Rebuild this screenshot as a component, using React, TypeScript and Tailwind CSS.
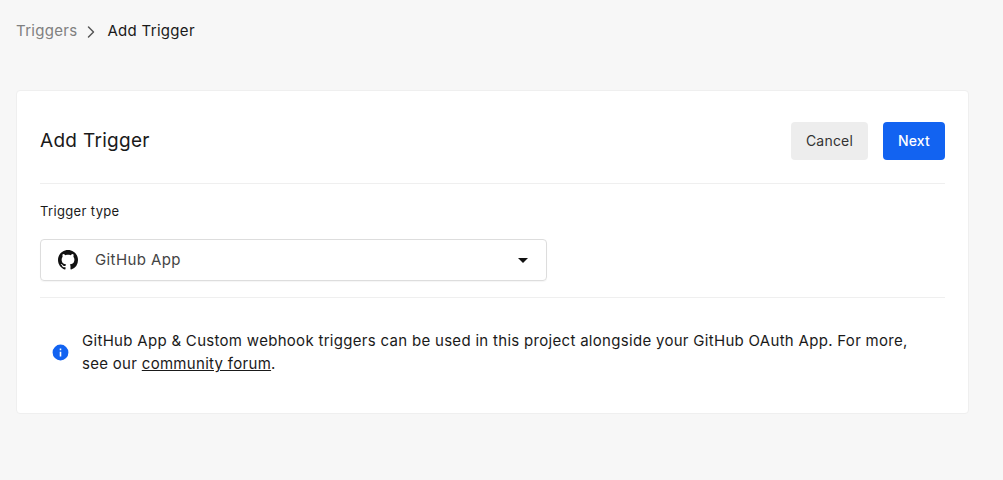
import { ChevronRight } from "lucide-react";

function GithubMark() {
  return (
    <svg viewBox="0 0 16 16" className="w-[20px] h-[20px]" fill="#111">
      <path d="M8 0C3.58 0 0 3.58 0 8c0 3.54 2.29 6.53 5.47 7.59.4.07.55-.17.55-.38 0-.19-.01-.82-.01-1.49-2.01.37-2.53-.49-2.69-.94-.09-.23-.48-.94-.82-1.13-.28-.15-.68-.52-.01-.53.63-.01 1.08.58 1.23.82.72 1.21 1.87.87 2.33.66.07-.52.28-.87.51-1.07-1.78-.2-3.64-.89-3.64-3.95 0-.87.31-1.59.82-2.15-.08-.2-.36-1.02.08-2.12 0 0 .67-.21 2.2.82.64-.18 1.32-.27 2-.27s1.36.09 2 .27c1.53-1.04 2.2-.82 2.2-.82.44 1.1.16 1.92.08 2.12.51.56.82 1.27.82 2.15 0 3.07-1.87 3.75-3.65 3.95.29.25.54.73.54 1.48 0 1.07-.01 1.93-.01 2.2 0 .21.15.46.55.38A8.01 8.01 0 0 0 16 8c0-4.42-3.58-8-8-8z" />
    </svg>
  );
}

export default function App() {
  return (
    <div className="w-[1003px] h-[480px] overflow-hidden bg-[#f7f7f7] font-['Inter',sans-serif] text-[#1a1a1a]">
      <div className="h-[62px] pt-px pl-4 flex items-center text-[15px] tracking-[0.3px]">
        <span className="text-[#808080]">Triggers</span>
        <ChevronRight className="w-[20px] h-[20px] ml-[4px] mr-[6px] text-[#555]" strokeWidth={1.75} />
        <span>Add Trigger</span>
      </div>

      <div className="ml-4 mt-7 w-[953px] h-[324px] bg-white border border-[#efefef] rounded px-[23px]">
        <div className="h-[93px] pt-[8px] flex items-center justify-between border-b border-[#efefef]">
          <h1 className="text-[19px] font-normal tracking-[0.3px]">Add Trigger</h1>
          <div className="flex gap-[15px] text-sm font-normal tracking-[0.2px]">
            <button className="w-[77px] h-[38px] rounded bg-[#ededed] text-[#333]">Cancel</button>
            <button className="w-[62px] h-[38px] rounded bg-[#1263f1] text-white font-medium">Next</button>
          </div>
        </div>

        <div className="h-[114px] border-b border-[#efefef] pt-[19px]">
          <p className="text-[13px] leading-4 tracking-[0.35px]">Trigger type</p>
          <div className="mt-[20px] w-[507px] h-[42px] border border-[#dddddd] rounded flex items-center pl-[17px] pr-[18px] shadow-[0_1px_1px_rgba(0,0,0,0.04)]">
            <GithubMark />
            <span className="ml-[17px] text-[15px] text-[#444] tracking-[0.4px]">GitHub App</span>
            <span className="ml-auto w-0 h-0 border-x-[5px] border-x-transparent border-t-[5px] border-t-[#111]" />
          </div>
        </div>

        <div className="flex items-center pt-[31px] pl-[11px]">
          <svg viewBox="0 0 24 24" className="w-[19px] h-[19px] shrink-0" fill="#1263f1">
            <path d="M12 2a10 10 0 1 0 0 20 10 10 0 0 0 0-20zm1 15h-2v-6h2v6zm0-8h-2V7h2v2z" />
          </svg>
          <p className="ml-[12px] text-[15px] leading-[23px] tracking-[0.3px] w-[840px]">
            GitHub App &amp; Custom webhook triggers can be used in this project alongside your GitHub OAuth App. For more, see our <a className="underline">community forum</a>.
          </p>
        </div>
      </div>
    </div>
  );
}
